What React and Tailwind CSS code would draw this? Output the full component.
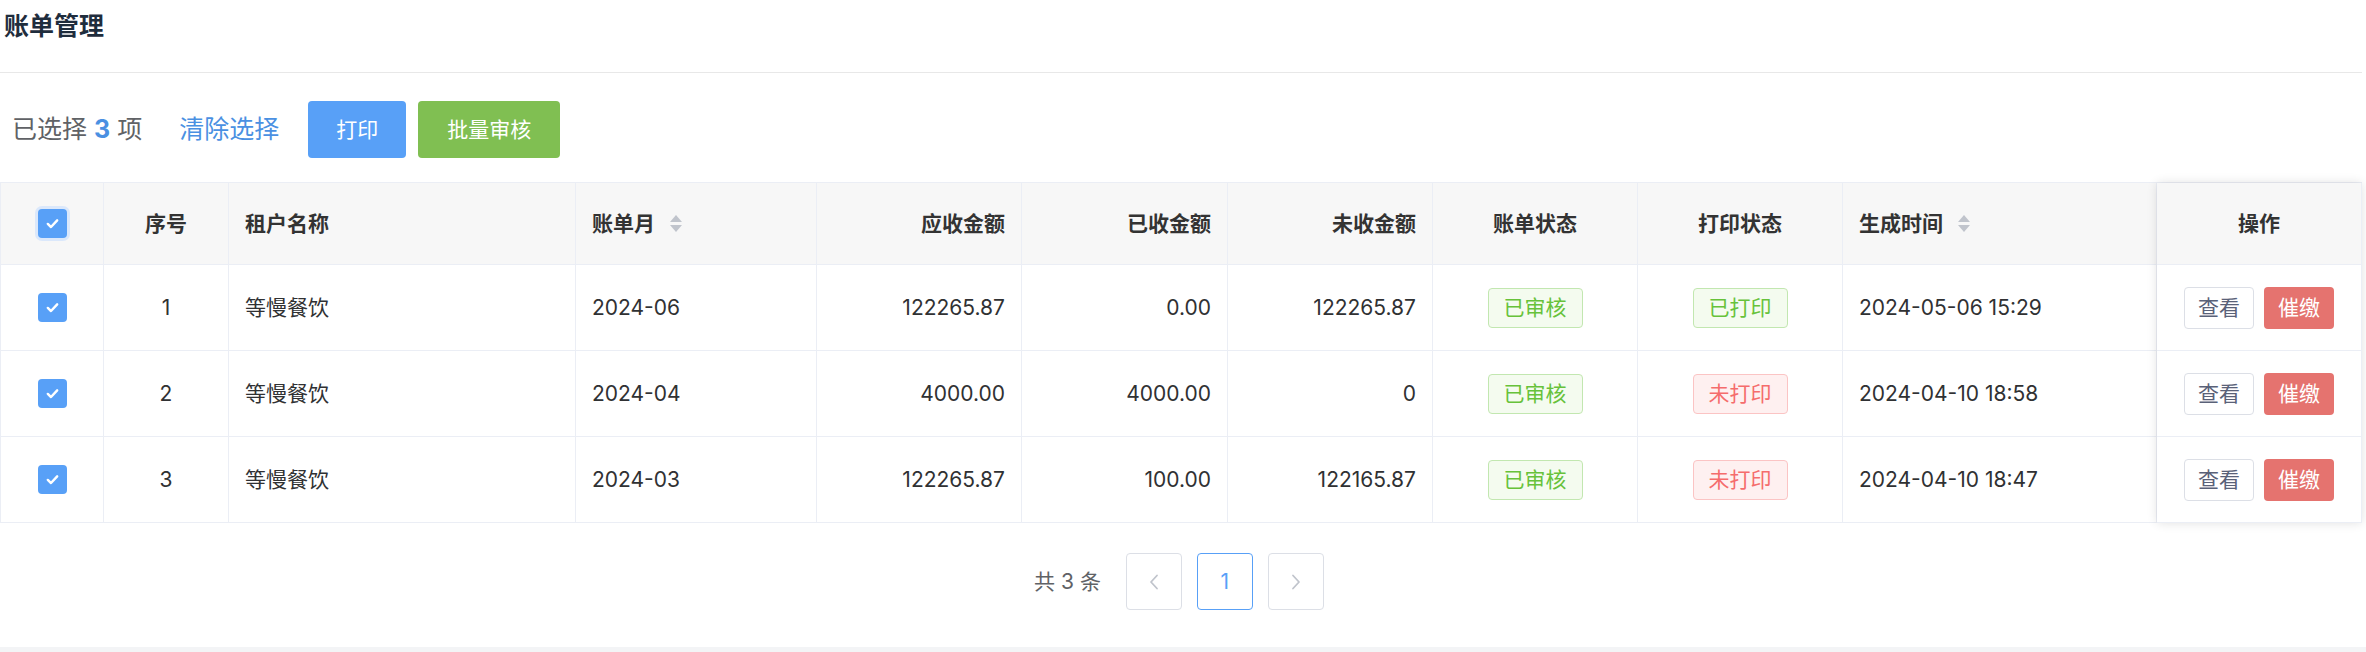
import React from "react"

const rows = [
  { no: 1, name: "等慢餐饮", month: "2024-06", due: "122265.87", paid: "0.00", left: "122265.87", printed: true, time: "2024-05-06 15:29" },
  { no: 2, name: "等慢餐饮", month: "2024-04", due: "4000.00", paid: "4000.00", left: "0", printed: false, time: "2024-04-10 18:58" },
  { no: 3, name: "等慢餐饮", month: "2024-03", due: "122265.87", paid: "100.00", left: "122165.87", printed: false, time: "2024-04-10 18:47" },
]

const grid = "grid grid-cols-[103px_125px_347px_241px_205px_206px_205px_205px_205px_314px]"
const cell = "flex items-center border-r border-b border-[#ebeef5] px-4"

function Checkbox({ ring }) {
  return (
    <span
      className={
        ring
          ? "flex h-[29px] w-[29px] items-center justify-center rounded-[4px] bg-[#58a0f7] ring-[3px] ring-[#dbe8fb]"
          : "flex h-[29px] w-[29px] items-center justify-center rounded-[4px] bg-[#58a0f7]"
      }
    >
      <svg viewBox="0 0 16 16" className="h-[17px] w-[17px]">
        <path d="M3.6 8.4l3 2.9 5.8-6.3" fill="none" stroke="white" strokeWidth="2.3" strokeLinecap="round" strokeLinejoin="round" />
      </svg>
    </span>
  )
}

function SortIcon() {
  return (
    <span className="ml-[15px] flex flex-col gap-[3px]">
      <span className="h-0 w-0 border-x-[6.5px] border-b-[7px] border-x-transparent border-b-[#c0c4cc]" />
      <span className="h-0 w-0 border-x-[6.5px] border-t-[7px] border-x-transparent border-t-[#c0c4cc]" />
    </span>
  )
}

function Tag({ ok, children }) {
  return (
    <span
      className={
        ok
          ? "flex h-[40px] items-center rounded-[4px] border border-[#c2e7b0] bg-[#f4fbef] px-[15px] text-[21px] text-[#67c23a]"
          : "flex h-[40px] items-center rounded-[4px] border border-[#fbc4c4] bg-[#fef0f0] px-[15px] text-[21px] text-[#f56c6c]"
      }
    >
      {children}
    </span>
  )
}

function Chevron({ dir }) {
  return (
    <svg viewBox="0 0 10 16" className="h-[16px] w-[10px]">
      <path
        d={dir === "left" ? "M8 1.5L2 8l6 6.5" : "M2 1.5L8 8l-6 6.5"}
        fill="none"
        stroke="#c0c4cc"
        strokeWidth="1.8"
        strokeLinecap="round"
        strokeLinejoin="round"
      />
    </svg>
  )
}

export default function App() {
  return (
    <div className="flex h-[652px] w-[2366px] flex-col bg-white font-['Inter','Noto_Sans_CJK_SC',sans-serif] text-[#303133]">
      <div className="w-[2362px] flex-1">
        {/* title */}
        <div className="h-[73px] border-b border-[#e8e8e8] pl-[4px] pt-[9px]">
          <h1 className="text-[25px] leading-[34px] font-semibold text-[#1f2d3d]">账单管理</h1>
        </div>

        {/* toolbar */}
        <div className="flex h-[109px] items-center pl-[12px] pt-[4px]">
          <span className="text-[25px] text-[#606266]">
            已选择 <span className="font-bold text-[#4a90e2]">3</span> 项
          </span>
          <span className="ml-[37px] text-[25px] text-[#4a90e2]">清除选择</span>
          <button className="ml-[29px] h-[57px] w-[98px] rounded-[4px] bg-[#58a0f7] text-[21px] text-white">打印</button>
          <button className="ml-[12px] h-[57px] w-[142px] rounded-[4px] bg-[#80bf52] text-[21px] text-white">批量审核</button>
        </div>

        {/* table */}
        <div className="flex border-t border-l border-[#ebeef5] text-[21px]">
          <div className="w-[2156px]">
            <div className={`${grid} h-[82px] bg-[#f7f7f7] font-semibold text-[#333]`}>
              <div className={`${cell} justify-center`}>
                <Checkbox ring />
              </div>
              <div className={`${cell} justify-center`}>序号</div>
              <div className={cell}>租户名称</div>
              <div className={cell}>
                账单月
                <SortIcon />
              </div>
              <div className={`${cell} justify-end`}>应收金额</div>
              <div className={`${cell} justify-end`}>已收金额</div>
              <div className={`${cell} justify-end`}>未收金额</div>
              <div className={`${cell} justify-center`}>账单状态</div>
              <div className={`${cell} justify-center`}>打印状态</div>
              <div className={cell}>
                生成时间
                <SortIcon />
              </div>
            </div>
            {rows.map((r) => (
              <div key={r.no} className={`${grid} h-[86px]`}>
                <div className={`${cell} justify-center`}>
                  <Checkbox />
                </div>
                <div className={`${cell} justify-center`}>{r.no}</div>
                <div className={cell}>{r.name}</div>
                <div className={cell}>{r.month}</div>
                <div className={`${cell} justify-end`}>{r.due}</div>
                <div className={`${cell} justify-end`}>{r.paid}</div>
                <div className={`${cell} justify-end`}>{r.left}</div>
                <div className={`${cell} justify-center`}>
                  <Tag ok>已审核</Tag>
                </div>
                <div className={`${cell} justify-center`}>
                  <Tag ok={r.printed}>{r.printed ? "已打印" : "未打印"}</Tag>
                </div>
                <div className={cell}>{r.time}</div>
              </div>
            ))}
          </div>

          {/* fixed action column */}
          <div className="relative z-10 w-[206px] bg-white shadow-[0_0_10px_rgba(0,0,0,0.12)]">
            <div className="flex h-[82px] items-center justify-center border-r border-b border-[#ebeef5] bg-[#f7f7f7] font-semibold text-[#333]">
              操作
            </div>
            {rows.map((r) => (
              <div key={r.no} className="flex h-[86px] items-center justify-center gap-[10px] border-r border-b border-[#ebeef5]">
                <button className="h-[42px] w-[70px] rounded-[4px] border border-[#dcdfe6] bg-white text-[21px] text-[#5a6178]">查看</button>
                <button className="h-[42px] w-[70px] rounded-[4px] bg-[#e5736f] text-[21px] text-white">催缴</button>
              </div>
            ))}
          </div>
        </div>

        {/* pagination */}
        <div className="flex items-center justify-center pt-[30px] pr-[4px] text-[21px]">
          <span className="text-[#606266]">共 3 条</span>
          <span className="ml-[25px] flex h-[57px] w-[56px] items-center justify-center rounded-[4px] border border-[#dcdfe6]">
            <Chevron dir="left" />
          </span>
          <span className="ml-[15px] flex h-[57px] w-[56px] items-center justify-center rounded-[4px] border border-[#58a0f7] text-[#58a0f7]">
            1
          </span>
          <span className="ml-[15px] flex h-[57px] w-[56px] items-center justify-center rounded-[4px] border border-[#dcdfe6]">
            <Chevron dir="right" />
          </span>
        </div>
      </div>
      <div className="h-[5px] bg-[#f3f4f6]" />
    </div>
  )
}
